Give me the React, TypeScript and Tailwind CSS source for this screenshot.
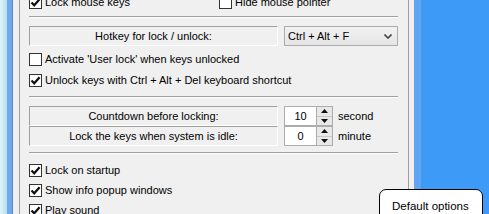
import { Fragment } from "react";

const font = { fontFamily: '"Liberation Sans", Arial, sans-serif' };

function Box({ checked }: { checked?: boolean }) {
	return (
		<div className="w-[13px] h-[13px] shrink-0 border border-[#333333] bg-white flex items-center justify-center">
			{checked ? (
				<svg width="11" height="11" viewBox="0 0 11 11">
					<path d="M1.5 5.5 L4.2 8.3 L9.6 2.2" fill="none" stroke="#111" strokeWidth="2.2" />
				</svg>
			) : null}
		</div>
	);
}

function Check({ label, checked, className }: { label: string; checked?: boolean; className?: string }) {
	return (
		<div className={"flex items-center gap-[3px] h-[13px] " + (className ?? "")}>
			<Box checked={checked} />
			<span className="text-[11px] leading-[13px] text-black whitespace-nowrap">{label}</span>
		</div>
	);
}

function Sep({ className }: { className: string }) {
	return (
		<div className={"flex flex-col " + className}>
			<div className="h-px bg-[#a0a0a0]" />
			<div className="h-px bg-white" />
		</div>
	);
}

function LabelBox({ text }: { text: string }) {
	return (
		<div className="w-[249px] h-[20px] border-t border-l border-[#a0a0a0] border-b-white border-r-white border-b border-r flex items-center justify-center text-[11px] text-black">
			{text}
		</div>
	);
}

function Spinner({ value, unit }: { value: string; unit: string }) {
	return (
		<div className="flex items-center">
			<div className="w-[49px] h-[20px] border border-[#acacac] bg-white flex">
				<div className="flex-1 flex items-center justify-center text-[11px] text-black">{value}</div>
				<div className="w-[16px] flex flex-col border-l border-[#acacac]">
					{["up", "down"].map((d) => (
						<div
							key={d}
							className="flex-1 bg-[#e8e8e8] flex items-center justify-center border-b border-[#c8c8c8] last:border-b-0"
						>
							<svg width="7" height="4" viewBox="0 0 7 4">
								<path d={d === "up" ? "M0 4 L3.5 0 L7 4 Z" : "M0 0 L3.5 4 L7 0 Z"} fill="#111" />
							</svg>
						</div>
					))}
				</div>
			</div>
			<span className="ml-[5px] text-[11px] text-black">{unit}</span>
		</div>
	);
}

export default function App() {
	return (
		<div className="relative w-[489px] h-[214px] overflow-hidden flex bg-[#f0f0f0]" style={font}>
			{/* left frame */}
			<div className="w-[7px] bg-gradient-to-r from-[#e2f4f8] to-[#b8dcf2]" />
			<div className="w-[5px] bg-[#6eaaf0]" />
			<div className="w-px bg-[#5a88bc]" />
			<div className="w-[6px] bg-[#f0f0f0]" />
			<div className="w-px bg-[#a0a0a0]" />

			{/* dialog content */}
			<div className="w-[388px] pl-[9px] pr-[10px] flex flex-col">
				<div className="mt-[-4px] flex">
					<Check label="Lock mouse keys" checked className="w-[190px]" />
					<Check label="Hide mouse pointer" />
				</div>
				<Sep className="mt-[7px]" />

				<div className="mt-[8px] flex gap-[6px]">
					<LabelBox text="Hotkey for lock / unlock:" />
					<div className="w-[114px] h-[20px] border border-[#acacac] bg-gradient-to-b from-[#f2f2f2] to-[#e5e5e5] flex items-center pl-[3px] pr-[5px]">
						<span className="flex-1 text-[11px] text-black">Ctrl + Alt + F</span>
						<svg width="8" height="5" viewBox="0 0 8 5">
							<path d="M0.5 0.5 L4 4 L7.5 0.5" fill="none" stroke="#444" strokeWidth="1.6" />
						</svg>
					</div>
				</div>

				<Check label="Activate 'User lock' when keys unlocked" className="mt-[7px]" />
				<Check label="Unlock keys with Ctrl + Alt + Del keyboard shortcut" checked className="mt-[8px]" />
				<Sep className="mt-[9px]" />

				<div className="mt-[8px] flex flex-col">
					{[
						["Countdown before locking:", "10", "second"],
						["Lock the keys when system is idle:", "0", "minute"],
					].map(([label, value, unit]) => (
						<div key={label} className="flex gap-[6px]">
							<LabelBox text={label} />
							<Spinner value={value} unit={unit} />
						</div>
					))}
				</div>
				<Sep className="mt-[6px]" />

				<Check label="Lock on startup" checked className="mt-[10px]" />
				<Check label="Show info popup windows" checked className="mt-[7px]" />
				<Check label="Play sound" checked className="mt-[7px]" />
			</div>

			{/* right frame */}
			<div className="w-px bg-[#a0a0a0]" />
			<div className="w-[5px] bg-[#f0f0f0]" />
			<div className="w-[7px] bg-[#62a6f2]" />
			<div className="flex-1 bg-[#3d9af7]" />

			{/* tooltip */}
			<div className="absolute left-[379px] top-[189px] w-[104px] h-[40px] rounded-[7px] border border-black bg-white pl-[12px] pt-[9px] text-[11.5px] leading-[14px] text-black">
				Default options
			</div>
		</div>
	);
}
